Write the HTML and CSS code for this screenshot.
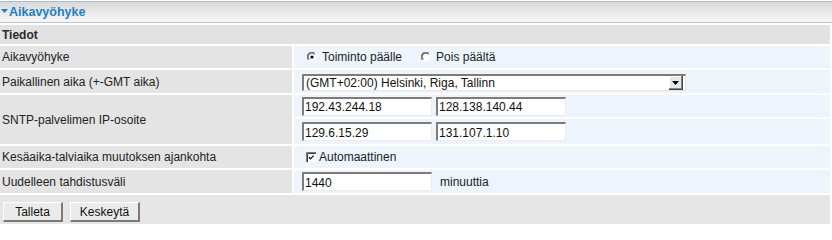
FILE: index.html
```html
<!DOCTYPE html>
<html lang="fi">
<head>
<meta charset="utf-8">
<title>Aikavyöhyke</title>
<link rel="stylesheet" href="styles.css">
</head>
<body>
<div class="panel">
  <div class="header">
    <svg class="tri" width="7" height="4" viewBox="0 0 7 4"><polygon points="0,0 7,0 3.5,4" fill="#1d7fc4"/></svg>
    <span class="title">Aikavyöhyke</span>
  </div>
  <div class="grid">
    <div class="section">Tiedot</div>

    <div class="label">Aikavyöhyke</div>
    <div class="value">
      <label class="opt">
        <svg class="radio" width="10" height="10" viewBox="0 0 10 10"><circle cx="5" cy="5" r="4.5" fill="#fff"/><path d="M1.2 7.5 A4.5 4.5 0 0 1 7.5 1.2" stroke="#7a7a7a" stroke-width="1.3" fill="none"/><path d="M2.3 7.8 A3.6 3.6 0 0 1 7.8 2.3" stroke="#3a3a3a" stroke-width="0.8" fill="none"/><circle cx="5" cy="5" r="1.6" fill="#000"/></svg>
        <span>Toiminto päälle</span>
      </label>
      <label class="opt second">
        <svg class="radio" width="10" height="10" viewBox="0 0 10 10"><circle cx="5" cy="5" r="4.5" fill="#fff"/><path d="M1.2 7.5 A4.5 4.5 0 0 1 7.5 1.2" stroke="#7a7a7a" stroke-width="1.3" fill="none"/><path d="M2.3 7.8 A3.6 3.6 0 0 1 7.8 2.3" stroke="#3a3a3a" stroke-width="0.8" fill="none"/></svg>
        <span>Pois päältä</span>
      </label>
    </div>

    <div class="label">Paikallinen aika (+-GMT aika)</div>
    <div class="value">
      <div class="select">
        <span class="select-text">(GMT+02:00) Helsinki, Riga, Tallinn</span>
        <span class="select-btn"><svg width="7" height="4" viewBox="0 0 7 4"><polygon points="0,0 7,0 3.5,4" fill="#000"/></svg></span>
      </div>
    </div>

    <div class="label sntp">SNTP-palvelimen IP-osoite</div>
    <div class="value">
      <input class="text" type="text" value="192.43.244.18">
      <input class="text" type="text" value="128.138.140.44">
    </div>
    <div class="value">
      <input class="text" type="text" value="129.6.15.29">
      <input class="text" type="text" value="131.107.1.10">
    </div>

    <div class="label">Kesäaika-talviaika muutoksen ajankohta</div>
    <div class="value">
      <label class="opt chk">
        <svg class="check" width="10" height="10" viewBox="0 0 10 10"><rect x="0" y="0" width="10" height="10" fill="#fff"/><path d="M0.5 10 V0.5 H10" stroke="#7a7a7a" stroke-width="1" fill="none"/><path d="M1.5 10 V1.5 H10" stroke="#3a3a3a" stroke-width="1" fill="none"/><path d="M3 5.2 L4.4 6.8 L7.6 3.6" stroke="#000" stroke-width="1.2" fill="none"/></svg>
        <span>Automaattinen</span>
      </label>
    </div>

    <div class="label">Uudelleen tahdistusväli</div>
    <div class="value">
      <input class="text" type="text" value="1440">
      <span class="unit">minuuttia</span>
    </div>
  </div>
  <div class="footer">
    <button class="btn btn-save" type="button">Talleta</button>
    <button class="btn btn-cancel" type="button">Keskeytä</button>
  </div>
</div>
</body>
</html>
```
FILE: styles.css
```css
html, body {
  margin: 0;
  padding: 0;
  background: #ffffff;
}
body {
  font-family: "Liberation Sans", Arial, sans-serif;
  font-size: 12px;
  color: #222222;
}
.panel {
  width: 832px;
  padding-top: 1px;
}
.header {
  height: 20px;
  border-top: 1px solid #a9bccd;
  border-bottom: 1px solid #b6c8d8;
  background: linear-gradient(#d9d9d9, #f8f8f8);
  display: flex;
  align-items: center;
  padding-left: 1px;
}
.tri {
  margin-right: 1px;
  margin-top: -2px;
}
.title {
  font-weight: bold;
  color: #1d7fc4;
  font-size: 12.5px;
}
.grid {
  display: grid;
  width: 830px;
  grid-template-columns: 292px 536px;
  grid-template-rows: 19px 22px 23px 22px 25px 22px 23px;
  gap: 2px;
  margin-top: 2px;
}
.section {
  grid-column: 1 / 3;
  background: #e2e2e2;
  font-weight: bold;
  display: flex;
  align-items: center;
  padding-left: 2px;
  color: #2a2a2a;
}
.label {
  background: #e4e4e4;
  display: flex;
  align-items: center;
  padding-left: 2px;
}
.sntp {
  grid-row: 4 / 6;
}
.value {
  background: #edf4fc;
  display: flex;
  align-items: center;
  padding-left: 8px;
  gap: 4px;
}
.opt {
  display: flex;
  align-items: center;
  margin-left: 5px;
}
.opt .radio {
  margin-right: 5px;
}
.opt.second {
  margin-left: 15px;
}
.chk {
  margin-left: 4px;
}
.chk .check {
  margin-right: 3px;
}
.select {
  position: relative;
  width: 381px;
  height: 14px;
  border-top: 2px solid #7c7c7c;
  border-left: 2px solid #7c7c7c;
  border-bottom: 1px solid #e6e6e6;
  border-right: 1px solid #e6e6e6;
  background: #ffffff;
  display: flex;
  align-items: center;
  margin-top: 2px;
  color: #111;
}
.select-text {
  padding-left: 2px;
}
.select-btn {
  position: absolute;
  right: 2px;
  top: 0;
  width: 13px;
  height: 13px;
  background: #e6e6e6;
  border-right: 1px solid #404040;
  border-bottom: 1px solid #404040;
  box-shadow: inset -1px -1px 0 #8a8a8a, inset 1px 1px 0 #ffffff;
  display: flex;
  align-items: center;
  justify-content: center;
}
.text {
  box-sizing: border-box;
  width: 130px;
  height: 19px;
  margin: 0;
  padding: 1px 1px 0;
  font-family: "Liberation Sans", Arial, sans-serif;
  font-size: 12px;
  color: #111;
  background: #ffffff;
  border-top: 2px solid #7c7c7c;
  border-left: 2px solid #7c7c7c;
  border-bottom: 1px solid #ececec;
  border-right: 1px solid #ececec;
  outline: none;
}
.unit {
  margin-left: 4px;
}
.footer {
  width: 830px;
  height: 29px;
  margin-top: 2px;
  background: #e6e6e6;
  display: flex;
  align-items: flex-start;
  padding-top: 7px;
  box-sizing: border-box;
  padding-left: 3px;
  gap: 7px;
}
.btn {
  height: 20px;
  margin: 0;
  padding: 0;
  font-family: "Liberation Sans", Arial, sans-serif;
  font-size: 12px;
  color: #111;
  background: #ebebeb;
  border-top: 1px solid #ffffff;
  border-left: 1px solid #ffffff;
  border-right: 2px solid #7a7a7a;
  border-bottom: 2px solid #7a7a7a;
}
.btn-save {
  width: 60px;
}
.btn-cancel {
  width: 70px;
}
```
